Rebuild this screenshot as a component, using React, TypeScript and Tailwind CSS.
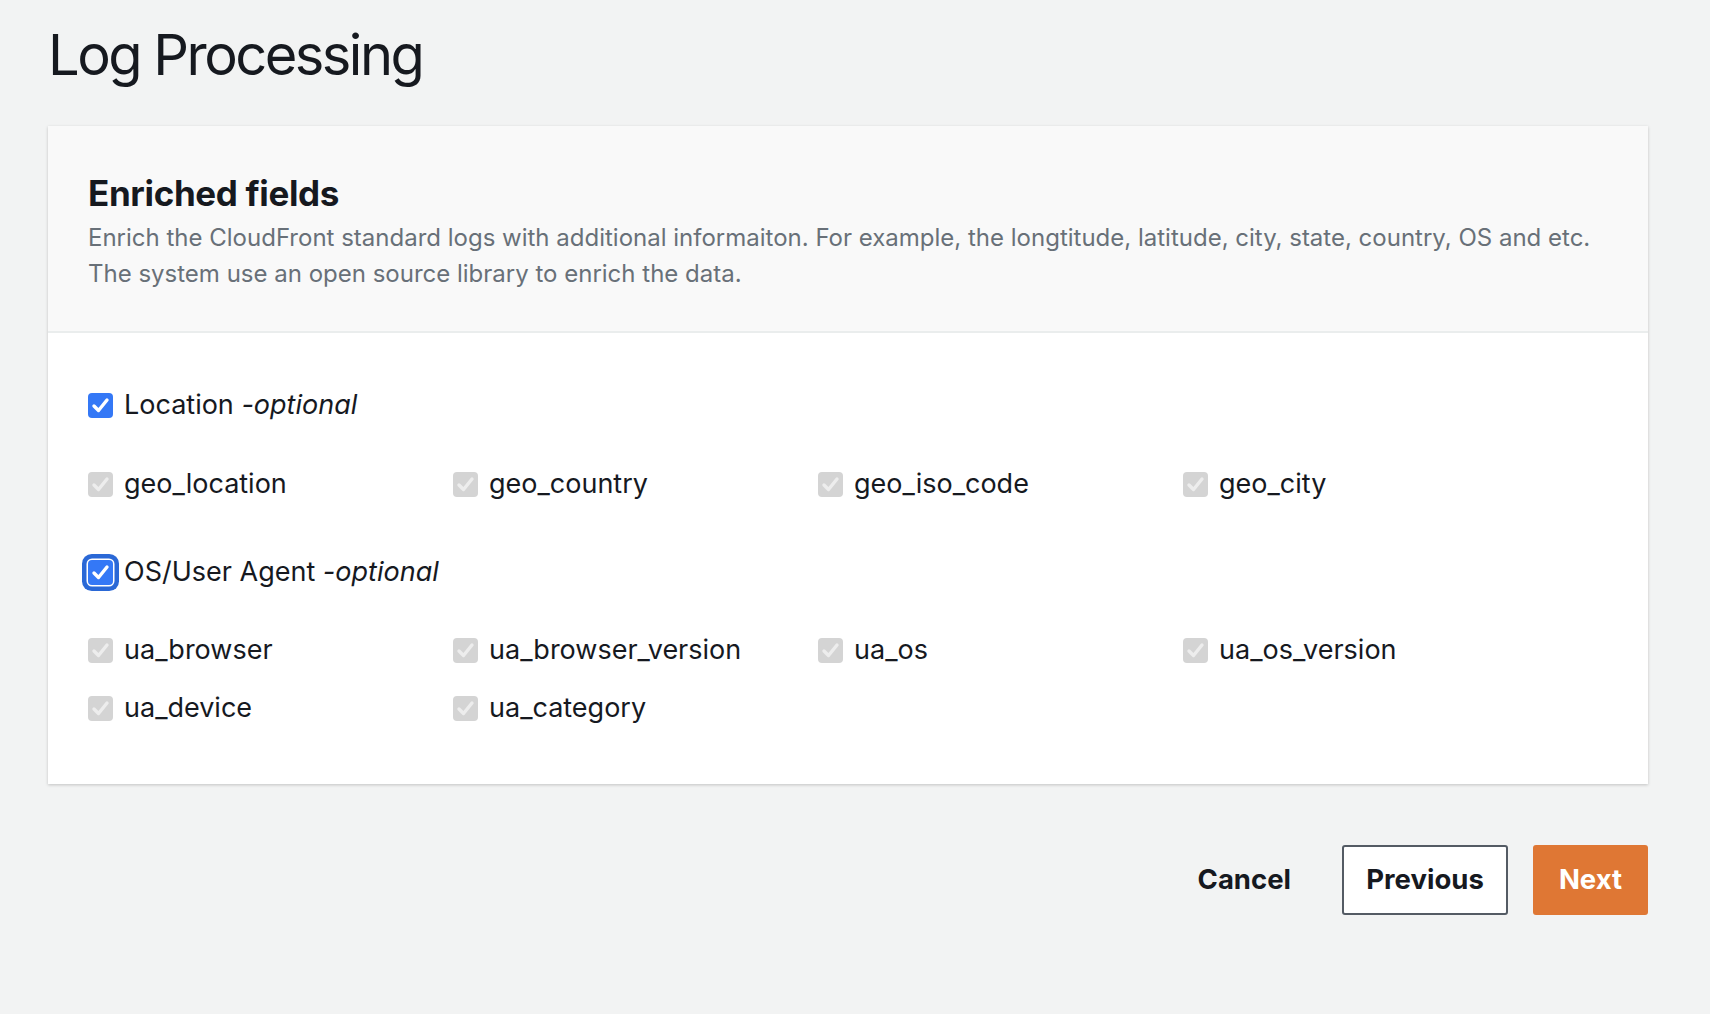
import React from "react";

const font = { fontFamily: "Inter, 'Noto Sans', 'Liberation Sans', sans-serif" };

function CheckIcon({ color }: { color: string }) {
  return (
    <svg viewBox="0 0 25 25" className="w-[25px] h-[25px]">
      <path d="M6 13 L10.5 17.5 L19 7" fill="none" stroke={color} strokeWidth="3.4" strokeLinecap="round" strokeLinejoin="round" />
    </svg>
  );
}

function Box({ variant }: { variant: "on" | "disabled" | "focus" }) {
  if (variant === "disabled") {
    return (
      <span className="w-[25px] h-[25px] rounded-[4px] bg-[#d4d4d4] flex shrink-0">
        <CheckIcon color="#ededed" />
      </span>
    );
  }
  return (
    <span
      className={
        "w-[25px] h-[25px] rounded-[4px] bg-[#3478f6] flex shrink-0 " +
        (variant === "focus" ? "shadow-[0_0_0_1.5px_#ffffff,0_0_0_6px_#2a68d6]" : "")
      }
    >
      <CheckIcon color="#ffffff" />
    </span>
  );
}

function Header({ label, focus }: { label: string; focus?: boolean }) {
  return (
    <div className="flex items-center h-[36px] gap-[11px]">
      <Box variant={focus ? "focus" : "on"} />
      <span className="text-[27px] text-[#16191f]">
        {label} <i>-optional</i>
      </span>
    </div>
  );
}

function Field({ name }: { name: string }) {
  return (
    <div className="flex items-center h-[36px] gap-[11px]">
      <Box variant="disabled" />
      <span className="text-[27px] text-[#16191f]">{name}</span>
    </div>
  );
}

export default function App() {
  return (
    <div className="min-h-[1014px] bg-[#f2f3f3] pl-[48px] pr-[62px] pt-[20px]" style={font}>
      <h1 className="text-[56px] leading-[70px] text-[#16191f] tracking-[-0.045em]">Log Processing</h1>
      <div className="mt-[36px] bg-white shadow-[0_1px_3px_rgba(0,0,0,0.2)]">
        <div className="bg-[#f9f9f9] border-b-2 border-[#eaeded] px-[40px] pt-[45px] pb-[39px]">
          <h2 className="text-[35px] leading-[44px] font-bold text-[#16191f] tracking-[-0.01em]">Enriched fields</h2>
          <p className="text-[24px] leading-[36px] text-[#687078] mt-[5px]">
            Enrich the CloudFront standard logs with additional informaiton. For example, the longtitude, latitude, city, state, country, OS and etc.
            <br />
            The system use an open source library to enrich the data.
          </p>
        </div>
        <div className="px-[40px] pt-[54px] pb-[58px]">
          <Header label="Location" />
          <div className="grid grid-cols-[365px_365px_365px_365px] gap-y-[22px] mt-[43px]">
            <Field name="geo_location" />
            <Field name="geo_country" />
            <Field name="geo_iso_code" />
            <Field name="geo_city" />
          </div>
          <div className="mt-[52px]">
            <Header label="OS/User Agent" focus />
          </div>
          <div className="grid grid-cols-[365px_365px_365px_365px] gap-y-[22px] mt-[42px]">
            <Field name="ua_browser" />
            <Field name="ua_browser_version" />
            <Field name="ua_os" />
            <Field name="ua_os_version" />
            <Field name="ua_device" />
            <Field name="ua_category" />
          </div>
        </div>
      </div>
      <div className="flex justify-end items-center mt-[61px] gap-[25px]">
        <button className="h-[70px] pl-[33px] pr-[26px] text-[27.5px] font-bold text-[#16191f]">Cancel</button>
        <button className="h-[70px] w-[166px] bg-white border-2 border-[#545b64] rounded-[3px] text-[27.5px] font-bold text-[#16191f]">
          Previous
        </button>
        <button className="h-[70px] w-[115px] bg-[#df7734] rounded-[3px] text-[27.5px] font-bold text-white">Next</button>
      </div>
    </div>
  );
}
